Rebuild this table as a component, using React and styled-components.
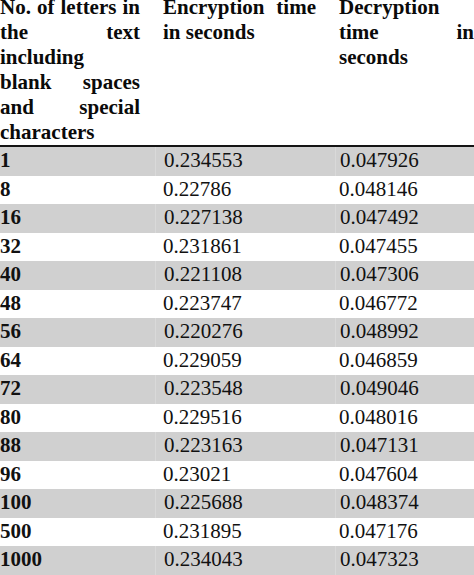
import React from 'react';
import styled, { createGlobalStyle } from 'styled-components';

const GlobalStyle = createGlobalStyle`
  html, body {
    margin: 0;
    padding: 0;
    background: #ffffff;
  }
  body {
    width: 474px;
    height: 575px;
    overflow: hidden;
  }
`;

const Wrapper = styled.div`
  width: 474px;
  height: 575px;
  overflow: hidden;
  font-family: "Liberation Serif", "Times New Roman", serif;
  font-size: 21px;
  color: #111111;
`;

const Table = styled.div`
  display: grid;
  grid-template-columns: 155px 180px 160px;
  width: 495px;
  margin-top: -5px;
`;

const HeadCell = styled.div`
  font-weight: bold;
  line-height: 25px;
  text-align: justify;
  padding: ${p => p.$pad};
  border-bottom: 2px solid #141414;
  color: #0a0a0a;
`;

const Cell = styled.div`
  height: 28.53px;
  box-sizing: border-box;
  line-height: 27px;
  padding: ${p => p.$pad};
  padding-bottom: 1.5px;
  background: ${p => (p.$shade ? '#d0d0d0' : '#ffffff')};
  font-weight: ${p => (p.$bold ? 'bold' : 'normal')};
  border-left: ${p => (p.$sep && p.$shade ? '1px solid #d9d9d9' : 'none')};
  white-space: nowrap;
`;

const pads = ['0 15px 0 0', '0 19px 0 8px', '0 21px 0 4px'];

const rows = [
  ['1', '0.234553', '0.047926'],
  ['8', '0.22786', '0.048146'],
  ['16', '0.227138', '0.047492'],
  ['32', '0.231861', '0.047455'],
  ['40', '0.221108', '0.047306'],
  ['48', '0.223747', '0.046772'],
  ['56', '0.220276', '0.048992'],
  ['64', '0.229059', '0.046859'],
  ['72', '0.223548', '0.049046'],
  ['80', '0.229516', '0.048016'],
  ['88', '0.223163', '0.047131'],
  ['96', '0.23021', '0.047604'],
  ['100', '0.225688', '0.048374'],
  ['500', '0.231895', '0.047176'],
  ['1000', '0.234043', '0.047323'],
];

const headers = [
  'No. of letters in the text including blank spaces and special characters',
  'Encryption time in seconds',
  'Decryption time in seconds',
];

export default function App() {
  return (
    <>
      <GlobalStyle />
      <Wrapper>
        <Table>
          {headers.map((h, i) => (
            <HeadCell key={i} $pad={pads[i]}>{h}</HeadCell>
          ))}
          {rows.map((r, ri) =>
            r.map((v, ci) => (
              <Cell
                key={`${ri}-${ci}`}
                $pad={pads[ci]}
                $shade={ri % 2 === 0}
                $bold={ci === 0}
                $sep={ci > 0}
              >
                {v}
              </Cell>
            ))
          )}
        </Table>
      </Wrapper>
    </>
  );
}
